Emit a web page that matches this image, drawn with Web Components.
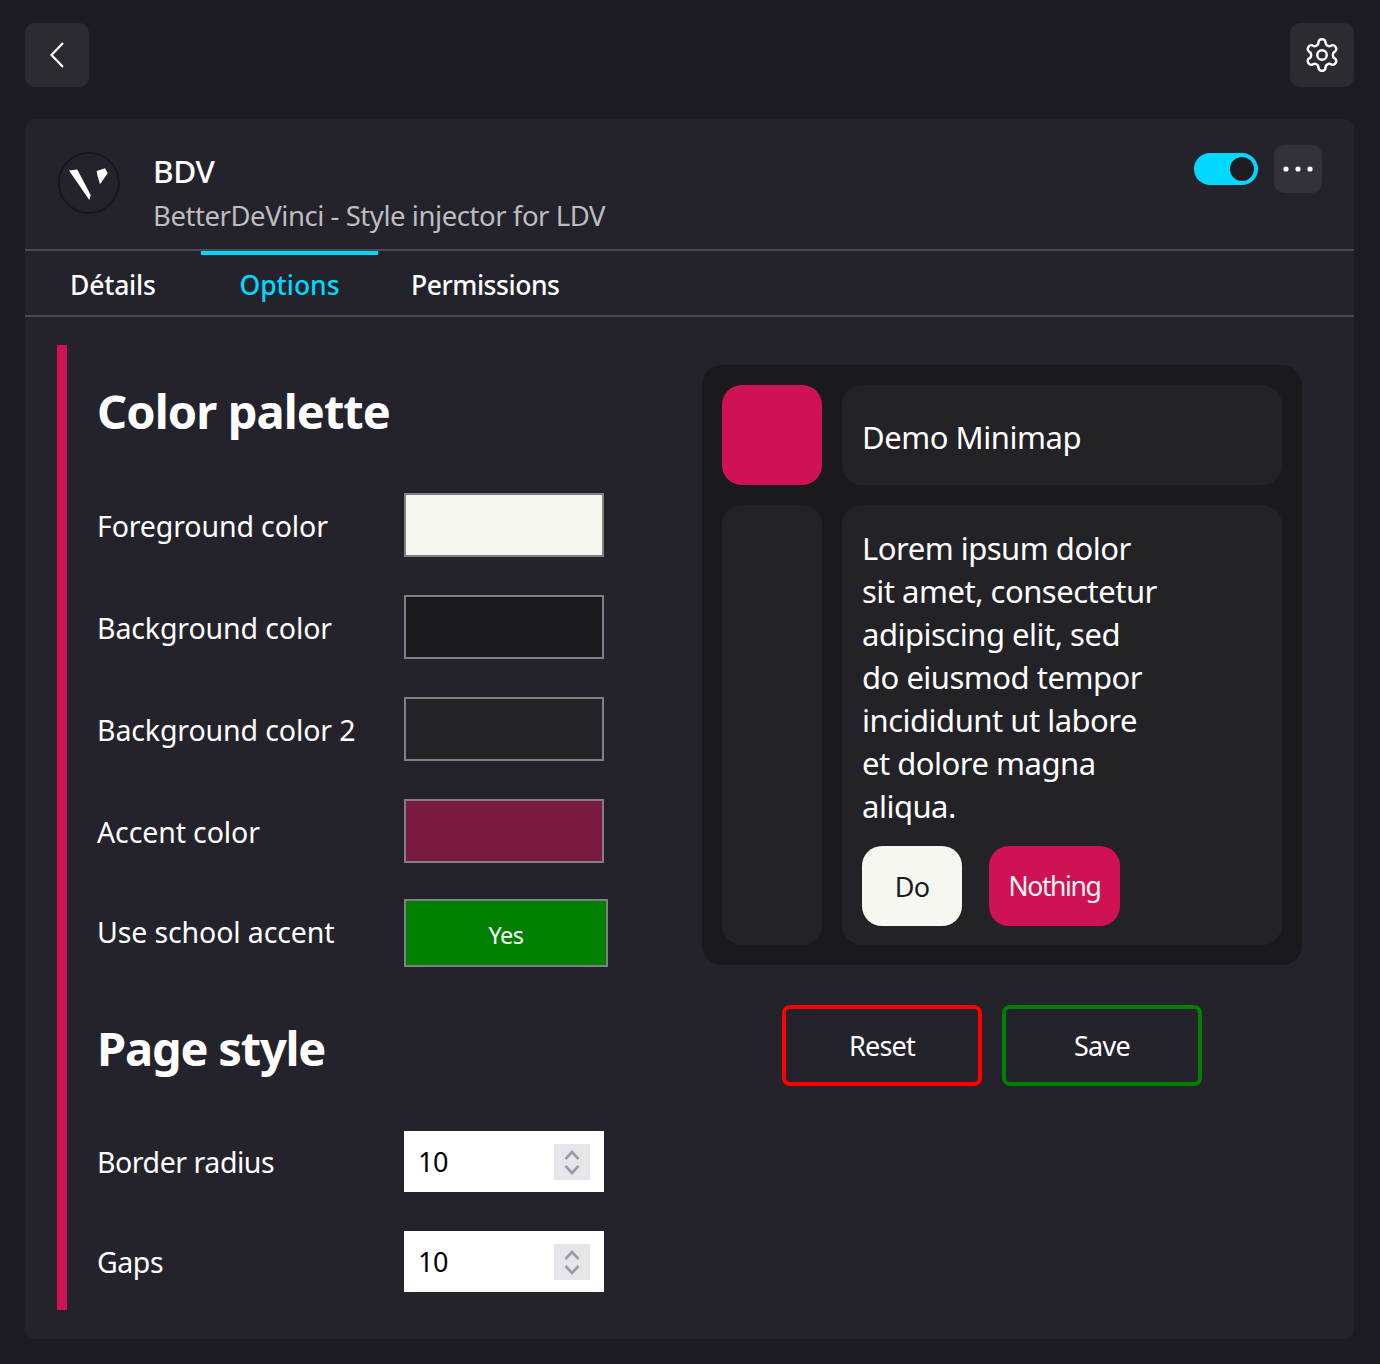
<!doctype html>
<html>
<head>
<meta charset="utf-8">
<title>BDV</title>
<style>
  html, body { margin: 0; background: #1d1c22; }
  body { font-family: "Noto Sans", "Open Sans", sans-serif; color: #fff; }
</style>
</head>
<body>
<bdv-app></bdv-app>

<script>
const FONT = '"Noto Sans", "Open Sans", sans-serif';

class IconButton extends HTMLElement {
  constructor() {
    super();
    this.attachShadow({ mode: 'open' }).innerHTML = `
      <style>
        :host { display: flex; align-items: center; justify-content: center; width: 64px; height: 64px; background: #2c2b31; border-radius: 10px; }
        :host([small]) { width: 48px; height: 48px; background: #33323b; }
      </style>
      <slot></slot>`;
  }
}

class ToggleSwitch extends HTMLElement {
  constructor() {
    super();
    this.attachShadow({ mode: 'open' }).innerHTML = `
      <style>
        :host { display: flex; justify-content: flex-end; align-items: center; box-sizing: border-box; width: 64px; height: 32px; padding-right: 4px; background: #00d9ff; border-radius: 16px; }
        i { display: block; width: 24px; height: 24px; border-radius: 50%; background: #1d1c22; }
      </style>
      <i></i>`;
  }
}

class TabBar extends HTMLElement {
  constructor() {
    super();
    this.attachShadow({ mode: 'open' }).innerHTML = `
      <style>
        :host { display: flex; height: 64px; border-top: 2px solid #4b4a50; border-bottom: 2px solid #4b4a50; font: 500 26.5px/60px ${FONT}; letter-spacing: -.2px; }
        div { box-sizing: border-box; height: 64px; }
        .a { width: 176px; padding-left: 45px; }
        .b { width: 177px; text-align: center; color: #00d9ff; border-top: 4px solid #00d9ff; letter-spacing: 0; }
        .c { padding-left: 33px; letter-spacing: -.45px; }
        .a, .c { padding-top: 4px; }
      </style>
      <div class="a">Détails</div>
      <div class="b">Options</div>
      <div class="c">Permissions</div>`;
  }
}

class FieldRow extends HTMLElement {
  constructor() {
    super();
    this.attachShadow({ mode: 'open' }).innerHTML = `
      <style>
        :host { display: flex; align-items: center; font-size: 28.5px; letter-spacing: -.12px; }
        .label { width: 307px; flex: none; }
        :host([swatch]) .label { padding-top: 2px; }
        :host([toggle]) .label { padding-bottom: 2px; }
        :host([tight]) { letter-spacing: -.45px; }
      </style>
      <span class="label"><slot name="label"></slot></span>
      <slot></slot>`;
  }
}

class ColorSwatch extends HTMLElement {
  constructor() {
    super();
    this.attachShadow({ mode: 'open' }).innerHTML = `
      <style>
        :host { display: block; box-sizing: border-box; width: 200px; height: 64px; border: 2px solid #808080; }
      </style>`;
  }
  connectedCallback() {
    this.style.background = this.getAttribute('color');
  }
}

class ToggleValue extends HTMLElement {
  constructor() {
    super();
    this.attachShadow({ mode: 'open' }).innerHTML = `
      <style>
        :host { display: flex; align-items: center; justify-content: center; box-sizing: border-box; width: 204px; height: 68px; padding-top: 3px; background: #008000; border: 2px solid #808080; font-size: 23.5px; letter-spacing: -.6px; }
      </style>
      <slot></slot>`;
  }
}

class NumberField extends HTMLElement {
  constructor() {
    super();
    this.attachShadow({ mode: 'open' }).innerHTML = `
      <style>
        :host { display: flex; align-items: center; justify-content: space-between; box-sizing: border-box; width: 200px; height: 61px; padding: 0 14px; background: #fff; color: #000; font-size: 27px; letter-spacing: -.5px; }
        .spin { display: block; width: 36px; height: 36px; background: #e6e6ea; }
      </style>
      <span><slot></slot></span>
      <svg class="spin" viewBox="0 0 36 36" fill="none" stroke="#9a9aa5" stroke-width="2.6"><path d="M11.5 15 18 8l6.5 7M11.5 22l6.5 7 6.5-7"/></svg>`;
  }
}

class OutlineButton extends HTMLElement {
  constructor() {
    super();
    this.attachShadow({ mode: 'open' }).innerHTML = `
      <style>
        :host { display: flex; align-items: center; justify-content: center; box-sizing: border-box; width: 200px; height: 81px; border: 4px solid currentColor; border-radius: 8px; font-size: 27px; letter-spacing: -.75px; }
        span { color: #fff; }
      </style>
      <span><slot></slot></span>`;
  }
}

class DemoMinimap extends HTMLElement {
  constructor() {
    super();
    this.attachShadow({ mode: 'open' }).innerHTML = `
      <style>
        :host { display: grid; grid-template-columns: 100px 440px; grid-template-rows: 100px 440px; gap: 20px; box-sizing: border-box; width: 600px; height: 600px; padding: 20px; background: #1a1a1c; border-radius: 20px; font-size: 31px; letter-spacing: -.5px; }
        div { border-radius: 20px; background: #232327; }
        .accent { background: #d01155; }
        .title { display: flex; align-items: center; padding: 4px 20px 0; letter-spacing: -.46px; }
        .body { padding: 22px 20px 0; line-height: 43px; }
        .actions { display: flex; gap: 27px; margin-top: 18px; }
        .actions span { display: flex; align-items: center; justify-content: center; height: 80px; border-radius: 20px; font-size: 27px; letter-spacing: -.7px; }
        .do { width: 100px; background: #f7f7f2; color: #1a1a1c; }
        .actions .no { width: 131px; background: #d01155; color: #f7f7f2; font-size: 26.5px; letter-spacing: -1.4px; }
      </style>
      <div class="accent"></div>
      <div class="title">Demo Minimap</div>
      <div></div>
      <div class="body">
        Lorem ipsum dolor<br>sit amet, consectetur<br>adipiscing elit, sed<br>do eiusmod tempor<br>incididunt ut labore<br>et dolore magna<br>aliqua.
        <section class="actions"><span class="do">Do</span><span class="no">Nothing</span></section>
      </div>`;
  }
}

class BdvApp extends HTMLElement {
  constructor() {
    super();
    this.attachShadow({ mode: 'open' }).innerHTML = `
      <style>
        :host { display: block; box-sizing: border-box; width: 1380px; height: 1364px; padding: 23px 26px 0 25px; }
        .top { display: flex; justify-content: space-between; margin-bottom: 32px; }
        .card { height: 1220px; background: #24232c; border-radius: 10px; }
        .head { display: flex; height: 130px; box-sizing: border-box; padding: 26px 32px 0 33px; }
        .logo { flex: none; margin: 7px 33px 0 0; }
        .name { flex: 1; }
        .name h1 { margin: 4px 0 0; font-size: 31.5px; line-height: 44px; font-weight: 500; letter-spacing: -.4px; }
        .name p { margin: 3px 0 0; font-size: 27.5px; line-height: 40px; color: #bdbdc0; letter-spacing: -.44px; }
        .ctl { display: flex; align-items: flex-start; gap: 16px; }
        .ctl bdv-toggle { margin-top: 8px; }
        .main { display: flex; padding: 28px 0 0 32px; }
        .left { box-sizing: border-box; width: 645px; height: 965px; border-left: 10px solid #d01155; padding-left: 30px; }
        h2 { margin: 0; font-size: 47px; line-height: 62px; font-weight: 700; letter-spacing: -.92px; }
        .palette { padding-top: 35px; }
        .rows { display: flex; flex-direction: column; gap: 38px; margin-top: 51px; }
        .rows .last { margin-top: -2px; }
        .page { padding-top: 50px; }
        .page h2 { letter-spacing: -1.2px; }
        .page .rows { margin-top: 52px; gap: 39px; }
        .right { margin-top: 20px; }
        .btns { display: flex; gap: 20px; margin: 40px 0 0 80px; }
      </style>
      <div class="top">
        <bdv-icon-button>
          <svg width="64" height="64" viewBox="0 0 64 64" fill="none" stroke="#fff" stroke-width="2.2"><path d="M38 20 26.5 32 38 44"/></svg>
        </bdv-icon-button>
        <bdv-icon-button>
          <svg width="38" height="38" viewBox="0 0 24 24" fill="none" stroke="#fff" stroke-width="1.55" stroke-linecap="round" stroke-linejoin="round"><path d="M12.22 2h-.44a2 2 0 0 0-2 2v.18a2 2 0 0 1-1 1.73l-.43.25a2 2 0 0 1-2 0l-.15-.08a2 2 0 0 0-2.73.73l-.22.38a2 2 0 0 0 .73 2.73l.15.1a2 2 0 0 1 1 1.72v.51a2 2 0 0 1-1 1.74l-.15.09a2 2 0 0 0-.73 2.73l.22.38a2 2 0 0 0 2.73.73l.15-.08a2 2 0 0 1 2 0l.43.25a2 2 0 0 1 1 1.73V20a2 2 0 0 0 2 2h.44a2 2 0 0 0 2-2v-.18a2 2 0 0 1 1-1.73l.43-.25a2 2 0 0 1 2 0l.15.08a2 2 0 0 0 2.73-.73l.22-.39a2 2 0 0 0-.73-2.73l-.15-.08a2 2 0 0 1-1-1.74v-.5a2 2 0 0 1 1-1.74l.15-.09a2 2 0 0 0 .73-2.73l-.22-.38a2 2 0 0 0-2.73-.73l-.15.08a2 2 0 0 1-2 0l-.43-.25a2 2 0 0 1-1-1.73V4a2 2 0 0 0-2-2z"/><circle cx="12" cy="12" r="3"/></svg>
        </bdv-icon-button>
      </div>
      <div class="card">
        <div class="head">
          <svg class="logo" width="62" height="62" viewBox="0 0 62 62">
            <circle cx="30.8" cy="30.8" r="30" fill="none" stroke="#17161a" stroke-width="1.8"/>
            <path fill="#fff" d="M11 18.5 19.3 17.5 32.7 43 31.3 48zM38.7 19 47 16.3 49.7 21.3 42 32.3 39.3 23z"/>
          </svg>
          <div class="name">
            <h1>BDV</h1>
            <p>BetterDeVinci - Style injector for LDV</p>
          </div>
          <div class="ctl">
            <bdv-toggle></bdv-toggle>
            <bdv-icon-button small>
              <svg width="30" height="6" viewBox="0 0 30 6" fill="#fff"><circle cx="3" cy="3" r="2.6"/><circle cx="15" cy="3" r="2.6"/><circle cx="27" cy="3" r="2.6"/></svg>
            </bdv-icon-button>
          </div>
        </div>
        <bdv-tabs></bdv-tabs>
        <div class="main">
          <div class="left">
            <div class="palette">
              <h2>Color palette</h2>
              <div class="rows">
                <bdv-row swatch><span slot="label">Foreground color</span><bdv-swatch color="#f7f7f2"></bdv-swatch></bdv-row>
                <bdv-row swatch><span slot="label">Background color</span><bdv-swatch color="#1a1a1c"></bdv-swatch></bdv-row>
                <bdv-row swatch><span slot="label">Background color 2</span><bdv-swatch color="#232327"></bdv-swatch></bdv-row>
                <bdv-row swatch><span slot="label">Accent color</span><bdv-swatch color="#7a1a3e"></bdv-swatch></bdv-row>
                <bdv-row toggle class="last"><span slot="label">Use school accent</span><bdv-toggle-value>Yes</bdv-toggle-value></bdv-row>
              </div>
            </div>
            <div class="page">
              <h2>Page style</h2>
              <div class="rows">
                <bdv-row tight><span slot="label">Border radius</span><bdv-number>10</bdv-number></bdv-row>
                <bdv-row tight><span slot="label">Gaps</span><bdv-number>10</bdv-number></bdv-row>
              </div>
            </div>
          </div>
          <div class="right">
            <bdv-demo></bdv-demo>
            <div class="btns">
              <bdv-outline style="color:#f00">Reset</bdv-outline>
              <bdv-outline style="color:#008000">Save</bdv-outline>
            </div>
          </div>
        </div>
      </div>`;
  }
}

customElements.define('bdv-icon-button', IconButton);
customElements.define('bdv-toggle', ToggleSwitch);
customElements.define('bdv-tabs', TabBar);
customElements.define('bdv-row', FieldRow);
customElements.define('bdv-swatch', ColorSwatch);
customElements.define('bdv-toggle-value', ToggleValue);
customElements.define('bdv-number', NumberField);
customElements.define('bdv-outline', OutlineButton);
customElements.define('bdv-demo', DemoMinimap);
customElements.define('bdv-app', BdvApp);
</script>
</body>
</html>
